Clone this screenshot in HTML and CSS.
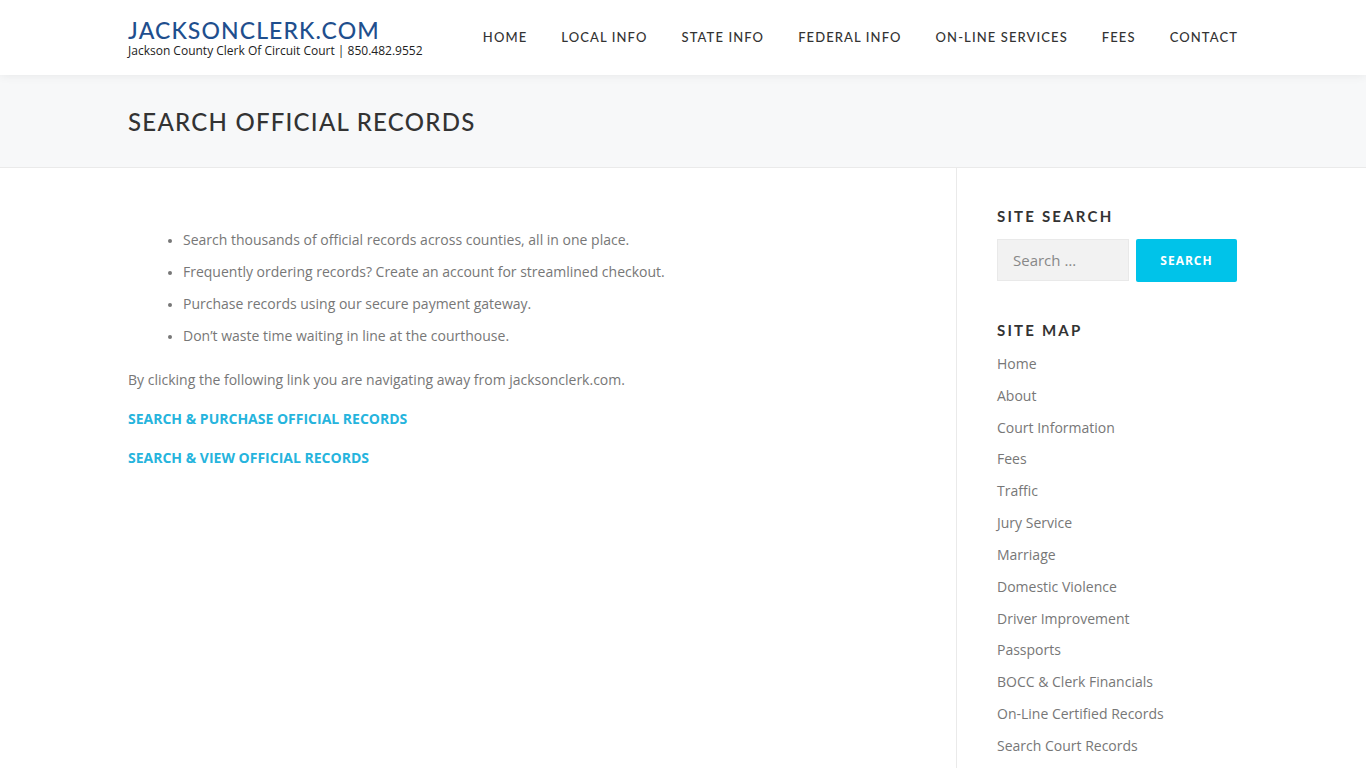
FILE: index.html
```html
<!DOCTYPE html>
<html lang="en">
<head>
<meta charset="utf-8">
<title>Search Official Records</title>
<link rel="stylesheet" href="styles.css">
</head>
<body>
<header class="site-header">
  <div class="container header-inner">
    <div class="brand">
      <a class="logo" href="#">JACKSONCLERK.COM</a>
      <div class="tagline">Jackson County Clerk Of Circuit Court | 850.482.9552</div>
    </div>
    <nav class="main-nav">
      <a href="#">HOME</a>
      <a href="#">LOCAL INFO</a>
      <a href="#">STATE INFO</a>
      <a href="#">FEDERAL INFO</a>
      <a href="#">ON-LINE SERVICES</a>
      <a href="#">FEES</a>
      <a href="#">CONTACT</a>
    </nav>
  </div>
</header>
<section class="page-header">
  <div class="container">
    <h1 class="page-title">SEARCH OFFICIAL RECORDS</h1>
  </div>
</section>
<div class="container main">
  <main class="content">
    <ul class="features">
      <li>Search thousands of official records across counties, all in one place.</li>
      <li>Frequently ordering records? Create an account for streamlined checkout.</li>
      <li>Purchase records using our secure payment gateway.</li>
      <li>Don’t waste time waiting in line at the courthouse.</li>
    </ul>
    <p class="note">By clicking the following link you are navigating away from jacksonclerk.com.</p>
    <p class="cta"><a href="#">SEARCH &amp; PURCHASE OFFICIAL RECORDS</a></p>
    <p class="cta"><a href="#">SEARCH &amp; VIEW OFFICIAL RECORDS</a></p>
  </main>
  <aside class="sidebar">
    <h4 class="widget-title">SITE SEARCH</h4>
    <form class="search-form">
      <input type="search" class="search-field" placeholder="Search …">
      <button type="button" class="search-btn">SEARCH</button>
    </form>
    <h4 class="widget-title map-title">SITE MAP</h4>
    <ul class="site-map">
      <li><a href="#">Home</a></li>
      <li><a href="#">About</a></li>
      <li><a href="#">Court Information</a></li>
      <li><a href="#">Fees</a></li>
      <li><a href="#">Traffic</a></li>
      <li><a href="#">Jury Service</a></li>
      <li><a href="#">Marriage</a></li>
      <li><a href="#">Domestic Violence</a></li>
      <li><a href="#">Driver Improvement</a></li>
      <li><a href="#">Passports</a></li>
      <li><a href="#">BOCC &amp; Clerk Financials</a></li>
      <li><a href="#">On-Line Certified Records</a></li>
      <li><a href="#">Search Court Records</a></li>
    </ul>
  </aside>
</div>
</body>
</html>
```

FILE: styles.css
```css
* { box-sizing: border-box; }
html, body { margin: 0; padding: 0; }
body {
  font-family: "Open Sans", "Liberation Sans", sans-serif;
  font-size: 14px;
  color: #777;
  background: #fff;
  overflow: hidden;
}
a { text-decoration: none; }
.container {
  width: 1110px;
  margin: 0 auto;
}
.site-header {
  height: 75px;
  background: #fff;
  position: relative;
  z-index: 2;
  box-shadow: 0 0 10px rgba(0,0,0,0.08);
}
.header-inner {
  display: flex;
  justify-content: space-between;
  align-items: center;
  height: 75px;
}
.brand { padding-top: 2px; }
.logo {
  display: block;
  font-family: "Lato", "Liberation Sans", sans-serif;
  font-size: 23px;
  font-weight: 500;
  letter-spacing: 1.1px;
  color: #1f4f8e;
  line-height: 24px;
}
.tagline {
  font-size: 12px;
  color: #222;
  line-height: 16px;
  margin-top: 1px;
}
.main-nav {
  display: flex;
  gap: 34px;
  padding-bottom: 2px;
}
.main-nav a {
  font-family: "Lato", "Liberation Sans", sans-serif;
  font-size: 13px;
  letter-spacing: 1.1px;
  color: #333;
  font-weight: 500;
}
.page-header {
  background: #f7f8f9;
  border-bottom: 1px solid #eaeaea;
  height: 93px;
  display: flex;
  align-items: center;
}
.page-title {
  margin: 0;
  font-family: "Lato", "Liberation Sans", sans-serif;
  font-weight: 500;
  font-size: 24px;
  letter-spacing: 1.25px;
  color: #333;
  line-height: 30px;
  padding-top: 2px;
}
.main {
  display: flex;
}
.content {
  width: 829px;
  border-right: 1px solid #eaeaea;
  padding-top: 62px;
  min-height: 610px;
}
.features {
  margin: 0 0 24px;
  padding-left: 55px;
  list-style: disc;
}
.features li {
  line-height: 20px;
  margin-bottom: 12px;
}
.features li::marker { color: #777; font-size: 12px; }
.note {
  margin: 0 0 19px;
  line-height: 20px;
}
.cta {
  margin: 0 0 19px;
  line-height: 20px;
}
.cta a {
  font-weight: 700;
  color: #26b4dd;
}
.sidebar {
  flex: 1;
  padding-left: 40px;
  padding-top: 37px;
}
.widget-title {
  margin: 0 0 12px;
  font-family: "Lato", "Liberation Sans", sans-serif;
  font-size: 15px;
  font-weight: 700;
  letter-spacing: 2.2px;
  color: #333;
  line-height: 22px;
}
.search-form {
  display: flex;
  gap: 7px;
}
.search-field {
  width: 132px;
  height: 42px;
  border: 1px solid #e9e9e9;
  background: #f2f2f2;
  font-family: "Open Sans", "Liberation Sans", sans-serif;
  font-size: 15px;
  padding: 0 15px;
  color: #777;
  outline: none;
}
.search-field::placeholder { color: #888; }
.search-btn {
  width: 101px;
  height: 43px;
  border: none;
  border-radius: 2px;
  background: #00c3e9;
  color: #fff;
  font-family: "Open Sans", "Liberation Sans", sans-serif;
  font-weight: 700;
  font-size: 12px;
  letter-spacing: 1px;
}
.map-title { margin-top: 37px; margin-bottom: 13px; }
.site-map {
  list-style: none;
  margin: 0;
  padding: 0;
}
.site-map li {
  line-height: 20px;
  margin-bottom: 11.83px;
}
.site-map a { color: #777; }
```
